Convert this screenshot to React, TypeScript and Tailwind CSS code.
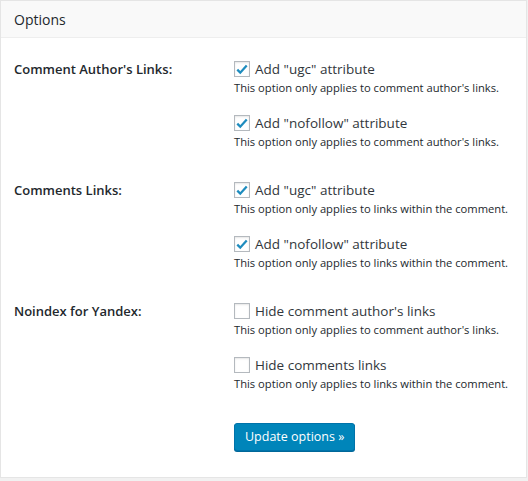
const sections = [
  {
    label: "Comment Author's Links:",
    items: [
      { text: 'Add "ugc" attribute', note: "This option only applies to comment author's links.", checked: true },
      { text: 'Add "nofollow" attribute', note: "This option only applies to comment author's links.", checked: true },
    ],
  },
  {
    label: "Comments Links:",
    items: [
      { text: 'Add "ugc" attribute', note: "This option only applies to links within the comment.", checked: true },
      { text: 'Add "nofollow" attribute', note: "This option only applies to links within the comment.", checked: true },
    ],
  },
  {
    label: "Noindex for Yandex:",
    items: [
      { text: "Hide comment author's links", note: "This option only applies to comment author's links.", checked: false },
      { text: "Hide comments links", note: "This option only applies to links within the comment.", checked: false },
    ],
  },
];

function Checkbox({ checked }: { checked: boolean }) {
  return (
    <span className="flex h-4 w-4 shrink-0 items-center justify-center border border-[#b4b9be] bg-white shadow-[inset_0_1px_2px_rgba(0,0,0,0.1)]">
      {checked && (
        <svg viewBox="0 0 16 16" className="h-[15px] w-[15px]">
          <path d="M2.6 8.2 L6 11.6 L13.4 3.4" fill="none" stroke="#1e8cbe" strokeWidth="2.6" />
        </svg>
      )}
    </span>
  );
}

export default function App() {
  return (
    <div className="h-[481px] w-[528px] bg-[#f1f1f1] font-['Open_Sans',sans-serif] text-[#23282d]">
      <div className="h-[478px] w-[527px] border border-[#e5e5e5] bg-white">
        <div className="flex h-[37px] items-center border-b border-[#eeeeee] bg-[#f9f9f9] px-[13px] text-[14px]">
          Options
        </div>
        <div className="px-[13px] pt-[21px]">
          {sections.map((section, i) => (
            <div key={section.label} className={`flex ${i > 0 ? "mt-[29px]" : ""}`}>
              <div className="w-[220px] shrink-0 text-[13px] font-semibold leading-[20px]">{section.label}</div>
              <div className="flex flex-col gap-4">
                {section.items.map((item) => (
                  <div key={item.text}>
                    <label className="flex h-5 items-center gap-[5px] whitespace-nowrap text-[13.5px] text-[#32373c]">
                      <Checkbox checked={item.checked} />
                      {item.text}
                    </label>
                    <p className="whitespace-nowrap text-[11.2px] leading-[18px] text-[#23282d]">{item.note}</p>
                  </div>
                ))}
              </div>
            </div>
          ))}
          <div className="ml-[220px] mt-[30px]">
            <button className="h-[28px] rounded-[3px] border border-[#0073aa] bg-[#0085ba] px-[10px] text-[12.5px] text-white shadow-[0_1px_0_#006799]">
              Update options »
            </button>
          </div>
        </div>
      </div>
    </div>
  );
}
